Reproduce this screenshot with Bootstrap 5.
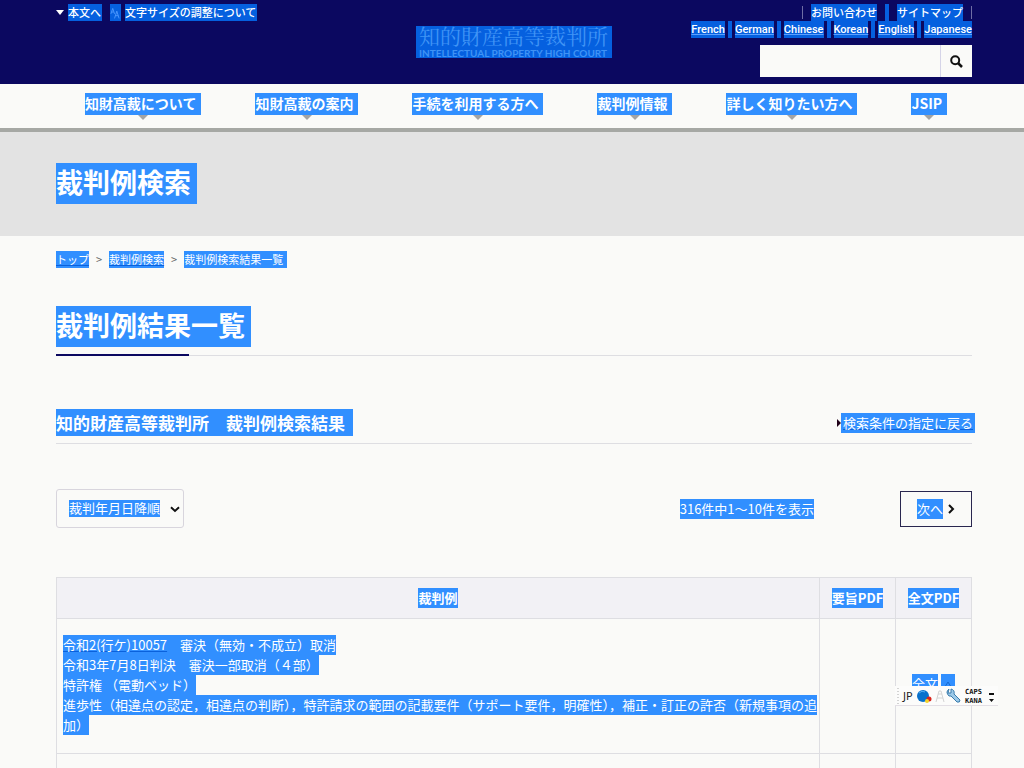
<!DOCTYPE html>
<html lang="ja">
<head>
<meta charset="utf-8">
<meta name="viewport" content="width=device-width, initial-scale=1">
<title>裁判例結果一覧 | 知的財産高等裁判所</title>
<link rel="stylesheet" href="https://cdn.jsdelivr.net/npm/bootstrap@5.3.0/dist/css/bootstrap.min.css">
<style>
:root{--sel:#318fff;--sel-dark:#0560df;--navy:#0b0860;--rule:#dedee2}
body{font-family:"Noto Sans CJK JP",sans-serif;font-size:13px;line-height:20px;background:#fafaf8;color:#222;overflow-x:hidden}
a{color:inherit}
.wrap{padding-left:56px;padding-right:52px}
.sel{display:inline-block;background:var(--sel);color:#fff;white-space:nowrap}
.sel-end{padding-right:4px}
.site-head{background:var(--navy);color:#fff;font-size:11px;line-height:17px;padding-top:4px;padding-bottom:7px;display:grid;grid-template-columns:1fr auto 1fr}
.site-head .sel{background:var(--sel-dark)}
.site-head a{text-decoration:none;font-weight:500}
.tri-down{border:4px solid transparent;border-top:5px solid #fff;border-bottom:0;margin-top:6px}
.quick .sel{padding-right:1px}
.brand{width:196px;margin-top:22px}
.brand svg{display:block;background:var(--sel-dark);overflow:visible}
.vline{width:1px;height:13px;background:#6f6da5}
.vsel{width:4px;background:var(--sel-dark)}
.langs{gap:3px;font-family:Roboto,"Noto Sans CJK JP",sans-serif}
.langs .sel{text-decoration:underline;text-decoration-color:#5ca0ff}
.finder{width:212px;height:32px;margin-top:7px}
.finder input{width:181px;border:0;border-right:1px solid #d5d4e8;background:#fafaf8;padding:0 8px}
.finder button{background:#fafaf8;border:0}
.gnav{border-bottom:4px solid #a6a8a4;padding:9px 0 8px 8px;gap:54px}
.gnav a{font-size:14px;line-height:20px;font-weight:700;text-decoration:none;padding:0 5px 2px 0}
.tri-grey{border:5px solid transparent;border-top-color:#a3a3a3;border-bottom:0}
.banner{background:#e3e3e3;padding-top:31px;padding-bottom:32px}
.big{font-size:27px;line-height:37px;font-weight:700;padding:0 6px 4px 0}
.crumbs{font-size:11px;line-height:17px;margin-top:15px;color:#666;gap:7px}
.crumbs a{text-decoration-color:#0a61dc}
.title-row{margin-top:38px;padding-bottom:8px;border-bottom:1px solid var(--rule);position:relative}
.title-row::after{content:"";position:absolute;left:0;bottom:-1px;width:133px;height:2px;background:var(--navy)}
.sub-row{margin-top:53px;padding-bottom:7px;border-bottom:1px solid var(--rule)}
.sub-row h3{font-size:17px;line-height:27px;font-weight:700}
.back{margin-right:-3px}
.back .sel{padding:0 2px;text-decoration-color:#0a61dc}
.tri-right{border:4px solid transparent;border-left:4px solid #200018;border-right:0}
.tools{margin-top:45px}
.sorter{appearance:none;width:128px;height:39px;padding:0 12px 2px;border:1px solid #d8d5dd;border-radius:3px;color:#fff;
background:url("data:image/svg+xml,%3Csvg xmlns='http://www.w3.org/2000/svg' width='10' height='7'%3E%3Cpath d='M1 1.3 5 5 9 1.3' fill='none' stroke='%23111' stroke-width='2'/%3E%3C/svg%3E") 113px 16px no-repeat,linear-gradient(var(--sel),var(--sel)) 12px 10px/91px 17px no-repeat,#fafaf8}
.count{margin-right:86px}
.next{width:72px;height:36px;border:1px solid #29264f;background:#fafaf8;padding:0}
.results{margin-top:49px;table-layout:fixed;width:100%;border-collapse:collapse}
.results th,.results td{border:1px solid var(--rule)}
.results th{background:#f2f1f5;text-align:center;padding:10px 0}
.results td{padding:16px 6px 18px}
.results .w-pdf{width:76px}
.results .cut td{height:15px;padding:0;border-bottom:0}
.case .sel{display:table}
.case a{text-decoration-color:#0a61dc}
.ime{position:fixed;top:686px;right:26px;width:103px;height:20px;background:#fcfcfb;border-bottom:1px solid #e3dfe5}
</style>
</head>
<body>
<header class="site-head wrap">
  <div class="quick d-flex align-items-start">
    <span class="tri-down me-1"></span>
    <a href="#main" class="sel">本文へ</a>
    <a href="#size" class="sel ms-2" aria-label="文字サイズ"><svg class="d-block" width="10" height="17" viewBox="0 0 11 17" fill="none" stroke="#4f9bff"><path d="M1 10 3 4l2 6M2 8h2M5 15l2.500-8 2.500 8M6 12h3"/></svg></a>
    <a href="#size" class="sel ms-1">文字サイズの調整について</a>
  </div>
  <a href="#top" class="brand" aria-label="知的財産高等裁判所"><svg width="196" height="32" fill="#3f93f5"><text x="3" y="18" font-size="21" font-weight="400" font-family="Noto Serif CJK JP, Noto Sans CJK JP, serif">知的財産高等裁判所</text><text x="3" y="31" font-size="10" font-weight="700" font-family="Lato, sans-serif">INTELLECTUAL PROPERTY HIGH COURT</text></svg></a>
  <div class="d-flex flex-column align-items-end">
    <div class="d-flex gap-2 align-items-center">
      <span class="vline"></span><a href="#contact" class="sel">お問い合わせ</a>
      <span class="vsel align-self-stretch"></span><a href="#map" class="sel">サイトマップ</a><span class="vline"></span>
    </div>
    <nav class="langs d-flex" aria-label="Languages">
      <a class="sel" href="#fr">French</a><span class="vsel"></span><a class="sel" href="#de">German</a><span class="vsel"></span><a class="sel" href="#zh">Chinese</a><span class="vsel"></span><a class="sel" href="#ko">Korean</a><span class="vsel"></span><a class="sel" href="#en">English</a><span class="vsel"></span><a class="sel" href="#ja">Japanese</a>
    </nav>
    <form class="finder d-flex">
      <input type="text" aria-label="サイト内検索">
      <button type="button" class="flex-fill p-0 d-flex align-items-center justify-content-center" aria-label="検索"><svg width="13" height="13" viewBox="0 0 13 13" fill="none" stroke="#111" stroke-width="2"><circle cx="5.200" cy="5.200" r="4"/><path d="m8 8 4 4" stroke-width="2.500"/></svg></button>
    </form>
  </div>
</header>
<nav class="gnav d-flex justify-content-center" aria-label="メイン">
  <div class="d-flex flex-column align-items-center"><a href="#a" class="sel">知財高裁について</a><span class="tri-grey"></span></div>
  <div class="d-flex flex-column align-items-center"><a href="#b" class="sel">知財高裁の案内</a><span class="tri-grey"></span></div>
  <div class="d-flex flex-column align-items-center"><a href="#c" class="sel">手続を利用する方へ</a><span class="tri-grey"></span></div>
  <div class="d-flex flex-column align-items-center"><a href="#d" class="sel">裁判例情報</a><span class="tri-grey"></span></div>
  <div class="d-flex flex-column align-items-center"><a href="#e" class="sel">詳しく知りたい方へ</a><span class="tri-grey"></span></div>
  <div class="d-flex flex-column align-items-center"><a href="#f" class="sel">JSIP</a><span class="tri-grey"></span></div>
</nav>
<div class="banner wrap d-flex"><h1 class="sel big mb-0">裁判例検索</h1></div>
<main id="main" class="wrap">
  <nav class="crumbs d-flex" aria-label="パンくず">
    <a href="#top" class="sel">トップ</a><span>&gt;</span><a href="#search" class="sel">裁判例検索</a><span>&gt;</span><span class="sel sel-end">裁判例検索結果一覧</span>
  </nav>
  <div class="title-row d-flex"><h2 class="sel big mb-0">裁判例結果一覧</h2></div>
  <div class="sub-row d-flex justify-content-between align-items-center">
    <h3 class="sel mb-0 pe-2">知的財産高等裁判所　裁判例検索結果</h3>
    <div class="back d-flex align-items-center"><span class="tri-right"></span><a href="#back" class="sel">検索条件の指定に戻る</a></div>
  </div>
  <div class="tools d-flex align-items-center">
    <select class="sorter me-auto" aria-label="並び順"><option>裁判年月日降順</option></select>
    <span class="sel count">316件中1〜10件を表示</span>
    <button type="button" class="next d-flex align-items-center justify-content-center gap-1"><span class="sel">次へ</span><svg width="8" height="10" viewBox="0 0 8 10" fill="none" stroke="#111" stroke-width="2"><path d="m2 1 4 4-4 4"/></svg></button>
  </div>
  <table class="results">
    <thead><tr><th><span class="sel">裁判例</span></th><th class="w-pdf"><span class="sel">要旨PDF</span></th><th class="w-pdf"><span class="sel">全文PDF</span></th></tr></thead>
    <tbody>
      <tr>
        <td class="case">
          <span class="sel"><a href="#case">令和2(行ケ)10057</a>　審決（無効・不成立）取消</span>
          <span class="sel">令和3年7月8日判決　審決一部取消（４部）</span>
          <span class="sel">特許権 （電動ベッド）</span>
          <span class="sel">進歩性（相違点の認定，相違点の判断），特許請求の範囲の記載要件（サポート要件，明確性），補正・訂正の許否（新規事項の追</span>
          <span class="sel">加）</span>
        </td>
        <td></td>
        <td class="text-center"><a href="#pdf" class="text-decoration-none"><span class="sel">全文</span> <span class="sel"><svg width="14" height="20" viewBox="0 0 14 20" fill="none" stroke="#1769cf"><path d="M2 14 7 6l5 8M4 12h6"/></svg></span></a></td>
      </tr>
      <tr class="cut"><td></td><td></td><td></td></tr>
    </tbody>
  </table>
</main>
<div class="ime" aria-label="JP IME">
<svg class="d-block" width="103" height="20">
  <path d="M3 2v16" stroke="#aaa" stroke-dasharray="1 2"/>
  <text x="8" y="14" font-size="11" font-family="Noto Sans, sans-serif" fill="#222">JP</text>
  <circle cx="28" cy="10" r="6" fill="#0871cc"/><path d="M24 7q3-3 6-1" stroke="#57b0f2" fill="none"/><circle cx="34" cy="13" r="2.500" fill="#d9241c"/><circle cx="32" cy="15" r="2" fill="#f5d529"/>
  <path d="m41 16 3-11h2l3 11M42 12h6M43 8h4" fill="none" stroke="#d4d4d4"/>
  <path d="M54 3q-4 3 0 7l2 0 6 6q3 1 3-2l-6-6q1-4-3-5v4l-3 0z" fill="#9cc9e8" stroke="#397bac"/>
  <text x="70" y="8" font-size="7" font-weight="700" font-family="DejaVu Sans Mono, monospace" fill="#111">CAPS</text>
  <text x="70" y="17" font-size="7" font-weight="700" font-family="DejaVu Sans Mono, monospace" fill="#111">KANA</text>
  <path d="M94 7h5v2h-5zM94 13h5l-2.500 3z" fill="#111"/>
</svg>
</div>
<script src="https://cdn.jsdelivr.net/npm/bootstrap@5.3.0/dist/js/bootstrap.bundle.min.js"></script>
</body>
</html>
